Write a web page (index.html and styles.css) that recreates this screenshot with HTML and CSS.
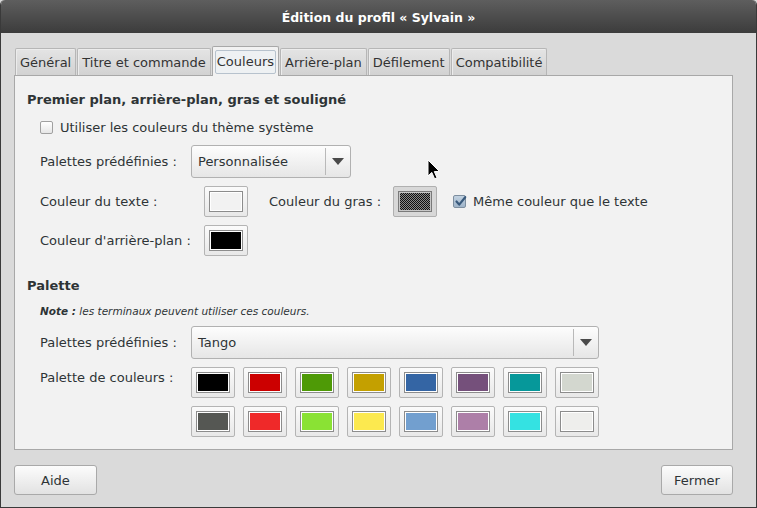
FILE: index.html
```html
<!DOCTYPE html>
<html lang="fr">
<head>
<meta charset="utf-8">
<title>Édition du profil</title>
<link rel="stylesheet" href="styles.css">
</head>
<body>
<div class="window">
  <div class="titlebar">Édition du profil « Sylvain »</div>
  <div class="content">
    <div class="tabs">
      <div class="tab">Général</div>
      <div class="tab">Titre et commande</div>
      <div class="tab active"><span class="focus">Couleurs</span></div>
      <div class="tab">Arrière-plan</div>
      <div class="tab">Défilement</div>
      <div class="tab">Compatibilité</div>
    </div>
    <div class="panel">
      <div class="heading">Premier plan, arrière-plan, gras et souligné</div>
      <div class="indent">
        <label class="check-row">
          <span class="checkbox"></span>
          <span>Utiliser les couleurs du thème système</span>
        </label>
        <div class="row row-combo">
          <span class="label label-combo">Palettes prédéfinies :</span>
          <div class="combo combo-small">
            <span class="combo-text">Personnalisée</span>
            <span class="combo-arrow"><span class="tri"></span></span>
          </div>
        </div>
        <div class="row row-color">
          <span class="label label-color">Couleur du texte :</span>
          <span class="colorbtn"><span class="swatch" style="background:#f2f2f2"></span></span>
          <span class="label label-bold">Couleur du gras :</span>
          <span class="colorbtn insensitive"><span class="swatch dither"></span></span>
          <label class="check-row inline">
            <span class="checkbox checked">
              <svg viewBox="0 0 13 13" width="13" height="13"><path d="M2.5 6.5 L5.2 9.6 L11.2 2.2" fill="none" stroke="#3a5a7c" stroke-width="2.2" stroke-linecap="round" stroke-linejoin="round"/></svg>
            </span>
            <span>Même couleur que le texte</span>
          </label>
        </div>
        <div class="row row-color">
          <span class="label label-color">Couleur d'arrière-plan :</span>
          <span class="colorbtn"><span class="swatch" style="background:#000"></span></span>
        </div>
      </div>

      <div class="heading heading2">Palette</div>
      <div class="indent">
        <div class="note"><b>Note :</b> les terminaux peuvent utiliser ces couleurs.</div>
        <div class="row row-combo2">
          <span class="label label-combo">Palettes prédéfinies :</span>
          <div class="combo combo-wide">
            <span class="combo-text">Tango</span>
            <span class="combo-arrow"><span class="tri"></span></span>
          </div>
        </div>
        <div class="row row-palette">
          <span class="label label-combo">Palette de couleurs :</span>
          <div class="palette">
            <span class="colorbtn"><span class="swatch" style="background:#000000"></span></span>
            <span class="colorbtn"><span class="swatch" style="background:#cc0000"></span></span>
            <span class="colorbtn"><span class="swatch" style="background:#4e9a06"></span></span>
            <span class="colorbtn"><span class="swatch" style="background:#c4a000"></span></span>
            <span class="colorbtn"><span class="swatch" style="background:#3465a4"></span></span>
            <span class="colorbtn"><span class="swatch" style="background:#75507b"></span></span>
            <span class="colorbtn"><span class="swatch" style="background:#06989a"></span></span>
            <span class="colorbtn"><span class="swatch" style="background:#d3d7cf"></span></span>
            <span class="colorbtn"><span class="swatch" style="background:#555753"></span></span>
            <span class="colorbtn"><span class="swatch" style="background:#ef2929"></span></span>
            <span class="colorbtn"><span class="swatch" style="background:#8ae234"></span></span>
            <span class="colorbtn"><span class="swatch" style="background:#fce94f"></span></span>
            <span class="colorbtn"><span class="swatch" style="background:#729fcf"></span></span>
            <span class="colorbtn"><span class="swatch" style="background:#ad7fa8"></span></span>
            <span class="colorbtn"><span class="swatch" style="background:#34e2e2"></span></span>
            <span class="colorbtn"><span class="swatch" style="background:#eeeeec"></span></span>
          </div>
        </div>
      </div>
    </div>
    <div class="actions">
      <button class="btn btn-aide">Aide</button>
      <button class="btn btn-fermer">Fermer</button>
    </div>
  </div>
  <svg class="cursor" width="14" height="22" viewBox="0 0 14 22">
    <path d="M1 1 L1 17 L4.8 13.4 L7.6 19.8 L10 18.8 L7.3 12.6 L12.4 12.4 Z" fill="#000" stroke="#fff" stroke-width="1" stroke-linejoin="round"/>
  </svg>
</div>
</body>
</html>
```

FILE: styles.css
```css
html, body {
  margin: 0;
  padding: 0;
  background: #dadada;
}
body {
  font-family: "DejaVu Sans", sans-serif;
  font-size: 13px;
  color: #2e3436;
}
.window {
  position: relative;
  width: 757px;
  height: 508px;
  box-sizing: border-box;
  background: #dadada;
  border-left: 1px solid #3a3a3a;
  border-right: 1px solid #3a3a3a;
  border-bottom: 1px solid #3a3a3a;
  border-radius: 5px 5px 0 0;
  display: flex;
  flex-direction: column;
  overflow: hidden;
}
.titlebar {
  height: 33px;
  flex: none;
  background: linear-gradient(#5e5e5e, #3c3c3c);
  color: #ffffff;
  font-weight: bold;
  font-size: 12.5px;
  display: flex;
  align-items: center;
  justify-content: center;
  padding-top: 1px;
  box-sizing: border-box;
  border-radius: 4px 4px 0 0;
}
.content {
  flex: 1;
  padding: 13px 23px 0 13px;
  display: flex;
  flex-direction: column;
}
.tabs {
  display: flex;
  gap: 1px;
  align-items: flex-end;
  height: 29px;
  position: relative;
  z-index: 1;
  padding-left: 1px;
}
.tab {
  height: 27px;
  box-sizing: border-box;
  padding: 0 4px;
  display: flex;
  align-items: center;
  background: linear-gradient(#e4e4e4, #d2d2d2);
  border: 1px solid #b6b6b6;
  border-bottom: none;
  border-radius: 2px 2px 0 0;
  box-shadow: inset 1px 1px 0 #ececec;
  color: #333;
}
.tab.active {
  height: 30px;
  margin-bottom: -1px;
  background: #f2f2f2;
  border-color: #a8a8a8;
  box-shadow: none;
  padding: 0 2px;
}
.focus {
  display: flex;
  align-items: center;
  height: 22px;
  padding: 0 1px;
  border: 1px solid #b7c2cd;
  border-radius: 2px;
  background: #eef1f3;
}
.panel {
  height: 375px;
  box-sizing: border-box;
  background: #f2f2f2;
  border: 1px solid #a8a8a8;
  padding: 16px 12px 0 12px;
}
.heading {
  font-weight: bold;
  height: 16px;
  line-height: 16px;
}
.heading2 {
  margin-top: 22px;
}
.indent {
  padding-left: 13px;
}
.check-row {
  display: flex;
  align-items: center;
  gap: 7px;
  height: 16px;
  margin-top: 11px;
}
.check-row.inline {
  margin-top: 0;
  margin-left: 16px;
}
.checkbox {
  width: 13px;
  height: 13px;
  box-sizing: border-box;
  border: 1px solid #a0a0a0;
  border-radius: 2px;
  background: linear-gradient(#ffffff, #e6e6e6);
  display: inline-block;
  position: relative;
}
.checkbox.checked {
  border-color: #7d8e9f;
  background: linear-gradient(#c2d2e1, #9fb4c9);
}
.checkbox svg {
  position: absolute;
  left: 0;
  top: -1px;
}
.row {
  display: flex;
  align-items: center;
}
.row-combo {
  margin-top: 10px;
}
.row-color {
  margin-top: 8px;
}
.label {
  flex: none;
}
.label-combo {
  width: 151px;
}
.label-color {
  width: 164px;
}
.label-bold {
  margin-left: 21px;
  width: 124px;
}
.combo {
  height: 33px;
  box-sizing: border-box;
  border: 1px solid #b1b1b1;
  border-radius: 3px;
  background: linear-gradient(#fdfdfd, #e6e6e6);
  display: flex;
  align-items: center;
}
.combo-small {
  width: 160px;
}
.combo-wide {
  width: 408px;
}
.combo-text {
  flex: 1;
  padding-left: 6px;
}
.combo-arrow {
  width: 24px;
  height: 27px;
  border-left: 1px solid #b9b9b9;
  display: flex;
  align-items: center;
  justify-content: center;
}
.tri {
  width: 0;
  height: 0;
  border-left: 6px solid transparent;
  border-right: 6px solid transparent;
  border-top: 7px solid #4a4a4a;
  margin-left: -1px;
}
.colorbtn {
  flex: none;
  width: 44px;
  height: 31px;
  box-sizing: border-box;
  border: 1px solid #b4b4b4;
  border-radius: 2px;
  background: linear-gradient(#fbfbfb, #e8e8e8);
  padding: 4px;
  display: inline-block;
}
.colorbtn.insensitive {
  background: #d8d8d8;
  border-color: #b0b0b0;
}
.swatch {
  display: block;
  width: 100%;
  height: 100%;
  box-sizing: border-box;
  border: 1px solid #8c8c8c;
  box-shadow: inset 0 0 0 1px #ffffff;
}
.swatch.dither {
  border-color: #7a7a7a;
  box-shadow: inset 0 0 0 1px #c8c8c8;
  background-color: #111;
  background-image: repeating-conic-gradient(#111 0 25%, #8a8a8a 0 50%);
  background-size: 2px 2px;
}
.note {
  font-size: 10.5px;
  font-style: italic;
  margin-top: 10px;
  height: 14px;
  line-height: 14px;
}
.row-combo2 {
  margin-top: 8px;
}
.row-palette {
  margin-top: 8px;
  align-items: flex-start;
}
.row-palette .label {
  line-height: 22px;
}
.palette {
  display: grid;
  grid-template-columns: repeat(8, 44px);
  column-gap: 8px;
  row-gap: 8px;
}
.actions {
  display: flex;
  justify-content: space-between;
  margin-top: 15px;
}
.btn {
  height: 30px;
  box-sizing: border-box;
  border: 1px solid #a9a9a9;
  border-radius: 3px;
  background: linear-gradient(#fcfcfc, #e2e2e2);
  font-family: inherit;
  font-size: 13px;
  color: #2e3436;
  padding: 0;
}
.btn-aide {
  width: 83px;
}
.btn-fermer {
  width: 72px;
}
.cursor {
  position: absolute;
  left: 426px;
  top: 159px;
}
```
